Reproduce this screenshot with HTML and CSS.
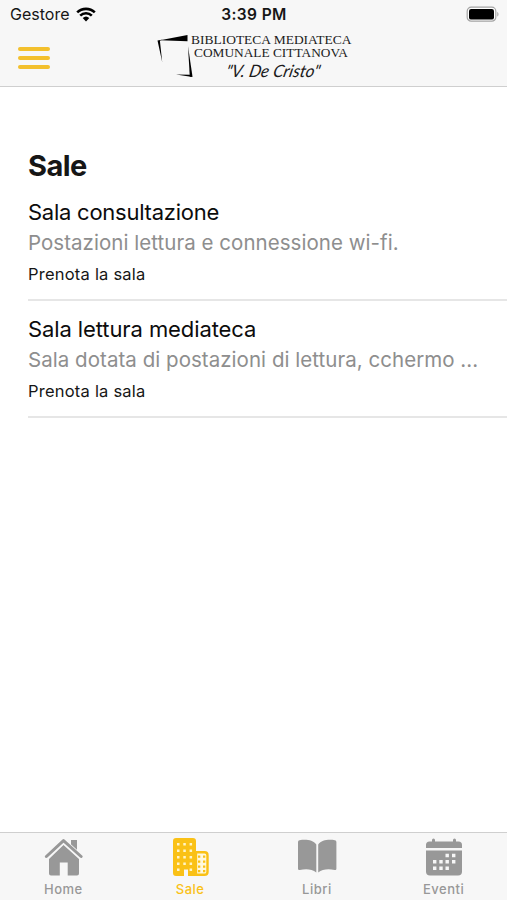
FILE: index.html
```
<!DOCTYPE html>
<html lang="it">

<head>
    <meta charset="UTF-8">
    <meta name="viewport" content="width=device-width, initial-scale=1.0">
    <title>Sale</title>
    <link rel="stylesheet" href="styles.css">
</head>

<body>

    <header class="testata">
        <div class="stato">
            <div class="operatore">
                <span>Gestore</span>
                <svg class="wifi" viewBox="0 0 20 15" width="20" height="15">
                    <path d="M1.2 5.4a12.7 12.7 0 0 1 17.6 0M4.2 8.6a8.4 8.4 0 0 1 11.6 0" fill="none" stroke="#000" stroke-width="2.6" />
                    <path d="M10 14.4l3.3-3.3a4.8 4.8 0 0 0-6.6 0z" />
                </svg>
            </div>
            <span class="ora">3:39 PM</span>
            <svg class="batteria" viewBox="0 0 34 17" width="34" height="17">
                <rect x="1.2" y="1.2" width="28.6" height="14" rx="4" fill="#fff" stroke="#a3a3a3" stroke-width="1.2" />
                <rect x="3" y="3" width="25" height="10.6" rx="2.2" />
                <path d="M31.3 6v4.6c1.6-.6 1.6-4 0-4.6z" fill="#a3a3a3" />
            </svg>
        </div>
        <div class="barra">
            <button class="menu" aria-label="Menu">
                <span></span>
                <span></span>
                <span></span>
            </button>
            <svg class="logo" viewBox="0 0 200 50" width="200" height="50">
                <path d="M5 10.200L32.500 5v6.200z" />
                <path d="M2.500 10.500L8 9.400l-3.100 1.400L7.200 32z" />
                <path d="M33 16l4.500 30.700h-2.700z" />
                <path d="M21 44.500l14.500.3 2 2.100z" />
                <text class="logo-nome" x="36" y="14.300" textLength="160.500" lengthAdjust="spacingAndGlyphs">BIBLIOTECA MEDIATECA</text>
                <text class="logo-nome" x="39" y="27.300" textLength="154" lengthAdjust="spacingAndGlyphs">COMUNALE CITTANOVA</text>
                <text class="logo-firma" x="70" y="47" textLength="94" lengthAdjust="spacingAndGlyphs">"V. De Cristo"</text>
            </svg>
        </div>
    </header>

    <main class="contenuto">
        <h1 class="titolo">Sale</h1>
        <ul class="sale">
            <li class="sala">
                <h2 class="nome">Sala consultazione</h2>
                <p class="descrizione">Postazioni lettura e connessione wi-fi.</p>
                <a class="prenota">Prenota la sala</a>
            </li>
            <li class="sala">
                <h2 class="nome nome-mediateca">Sala lettura mediateca</h2>
                <p class="descrizione">Sala dotata di postazioni di lettura, cchermo ...</p>
                <a class="prenota">Prenota la sala</a>
            </li>
        </ul>
    </main>

    <nav class="tabs">
        <a class="tab">
            <svg viewBox="0 0 40 40" width="40" height="40">
                <path d="M28 3h6v13l-6-5z" />
                <path d="M20.500 8L36 22v14.500q0 2-2 2h-9.300V25.500h-7.900v13H8q-2 0-2-2V22z" />
                <path d="M3 20.200L20.500 4 38.500 20.200" fill="none" stroke="#f7f7f7" stroke-width="5" />
                <path d="M3.400 19.500L20.500 3.600l17.600 15.900" fill="none" stroke="currentColor" stroke-width="3" stroke-linecap="round" stroke-linejoin="round" />
            </svg>
            <span>Home</span>
        </a>
        <a class="tab attiva">
            <svg viewBox="0 0 40 40" width="40" height="40">
                <path d="M6 1h17q3 0 3 3v35h-8v-6.500h-4V39H6q-3 0-3-3V4q0-3 3-3z" />
                <path d="M26 15.200h8.500q3 0 3 3V35q0 2.700-3 2.700H26z" fill="#fff9df" stroke="currentColor" stroke-width="2.400" />
                <g fill="#fff5c9">
                    <path d="M7 6h2.500v2.500H7zM13.300 6h2.500v2.500h-2.500zM19.600 6h2.500v2.500h-2.500zM7 12.500h2.500V15H7zM13.300 12.500h2.500V15h-2.500zM19.600 12.500h2.500V15h-2.500zM7 19h2.500v2.500H7zM13.300 19h2.500v2.500h-2.500zM19.600 19h2.500v2.500h-2.500zM7 25.500h2.500V28H7zM13.300 25.500h2.500V28h-2.500zM19.600 25.500h2.500V28h-2.500zM7 31.500h2.500V34H7zM19.600 31.500h2.500V34h-2.500z" />
                </g>
                <path d="M28 18.500h2.300v2.300H28zM33 18.500h2.300v2.300H33zM28 23.500h2.300v2.300H28zM33 23.500h2.300v2.300H33zM28 28.500h2.300v2.300H28zM33 28.500h2.300v2.300H33zM28 33h2.300v2.300H28zM33 33h2.300v2.300H33z" />
            </svg>
            <span>Sale</span>
        </a>
        <a class="tab">
            <svg viewBox="0 0 40 40" width="40" height="40">
                <path d="M19.300 7.500v28C15 32 9 31.700 2.800 33Q1 33.400 1 31.700V5q0-1.500 1.500-1.700C9 2.200 16 3 19.300 7.500z" />
                <path d="M21.200 7.500v28c4.300-3.500 10.300-3.800 16.500-2.500q1.700.4 1.700-1.300V5q0-1.500-1.500-1.700C31.500 2.200 24.500 3 21.200 7.500z" />
            </svg>
            <span>Libri</span>
        </a>
        <a class="tab">
            <svg viewBox="0 0 40 40" width="40" height="40">
                <path d="M2 11V8q0-3.500 3.500-3.500h2.500V3q0-1.500 1.500-1.500T11 3v1.500h18V3q0-1.500 1.500-1.500T32 3v1.500h2.500Q38 4.500 38 8v3z" />
                <path d="M2 13.500h36v21q0 4-4 4H6q-4 0-4-4z" />
                <g fill="#f7f7f7">
                    <path d="M21.500 16.800h3.400v3.400h-3.400zM28 16.800h3.400v3.400H28zM9 23h3.400v3.400H9zM15.300 23h3.400v3.400h-3.400zM21.500 23h3.400v3.400h-3.400zM28 23h3.400v3.400H28zM9 29.500h3.400v3.400H9zM15.300 29.500h3.400v3.400h-3.400zM21.500 29.500h3.400v3.400h-3.400z" />
                </g>
            </svg>
            <span>Eventi</span>
        </a>
    </nav>

</body>

</html>
```
FILE: styles.css
```
* {
    box-sizing: border-box;
}

body {
    margin: 0;
    height: 900px;
    display: flex;
    flex-direction: column;
    background: #fff;
    color: #161616;
    font-family: Inter, "Liberation Sans", sans-serif;
    overflow: hidden;
}

/* Cabecera */

.testata {
    height: 87px;
    background: #f7f7f7;
    border-bottom: 1px solid #cfcfcf;
}

.stato {
    display: grid;
    grid-template-columns: 1fr auto 1fr;
    align-items: center;
    height: 28px;
    padding: 0 7px 0 10px;
}

.operatore {
    display: flex;
    align-items: center;
    gap: 7px;
    font-size: 16px;
}

.ora {
    margin-right: 2px;
    font-size: 15.5px;
    font-weight: 600;
    letter-spacing: 0.4px;
}

.batteria {
    justify-self: end;
}

.barra {
    display: flex;
    padding: 2px 0 0 18px;
}

.menu {
    display: flex;
    flex-direction: column;
    gap: 5px;
    width: 32px;
    margin: 17px 105px 0 0;
    padding: 0;
    border: none;
    background: none;
}

.menu span {
    height: 4px;
    width: 32px;
    border-radius: 2px;
    background: #f3c02d;
}

.logo-nome {
    font-family: "Liberation Serif", serif;
    font-size: 13.5px;
    fill: #1c1c1c;
}

.logo-firma {
    font-family: Lato, sans-serif;
    font-size: 17px;
    font-style: italic;
    fill: #1c1c1c;
    transform: skewX(-12deg);
    transform-origin: 70px 47px;
}

/* Lista */

.contenuto {
    flex: 1;
    padding: 61px 0 0 28px;
}

.titolo {
    margin: 0 0 13px;
    font-size: 29px;
    line-height: 36px;
    font-weight: 700;
    letter-spacing: -0.6px;
}

.sale {
    list-style: none;
    margin: 0;
    padding: 0;
}

.sala {
    height: 117px;
    border-bottom: 2px solid #e6e6e6;
}

.sala:first-child {
    height: 104px;
}

.sala + .sala {
    padding-top: 13px;
}

.nome {
    margin: 0;
    font-size: 22px;
    line-height: 30px;
    font-weight: 400;
    letter-spacing: -0.25px;
    color: #0c0c0c;
}

.nome-mediateca {
    letter-spacing: -0.1px;
}

.descrizione {
    margin: 0;
    font-size: 20.5px;
    line-height: 31px;
    letter-spacing: 0.04px;
    color: #8e8e8e;
    white-space: nowrap;
}

.prenota {
    display: block;
    font-size: 16.5px;
    line-height: 32px;
    letter-spacing: 0.22px;
}

/* Pestañas */

.tabs {
    display: flex;
    height: 68px;
    background: #f7f7f7;
    border-top: 1px solid #cfcfcf;
}

.tab {
    flex: 1;
    display: flex;
    flex-direction: column;
    align-items: center;
    padding-top: 4px;
    color: #989898;
    font-size: 13px;
    line-height: 16px;
    font-weight: 500;
    letter-spacing: 0.5px;
}

.tab svg {
    fill: currentColor;
    margin-bottom: 4px;
}

.attiva {
    color: #fac116;
}
```
